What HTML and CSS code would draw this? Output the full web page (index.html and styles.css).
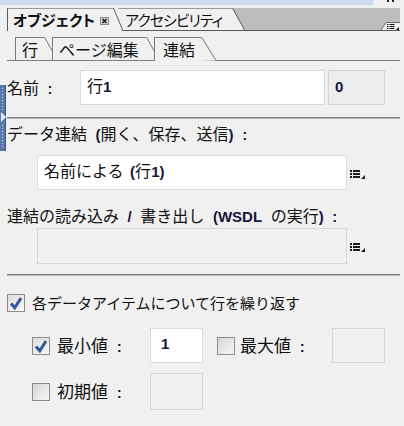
FILE: index.html
```html
<!DOCTYPE html>
<html lang="ja">
<head>
<meta charset="utf-8">
<link rel="stylesheet" href="styles.css">
</head>
<body>
<div class="topbar">
  <div class="titlefill"></div>
  <div class="grip"><svg width="8" height="2" viewBox="0 0 8 2"><rect x="0" y="0" width="2" height="2" fill="#222"/><rect x="5" y="0" width="2" height="2" fill="#222"/></svg></div>
</div>

<div class="tabs">
  <div class="tab tab-active">
    <span class="tab-label">オブジェクト<span class="close"><svg width="9" height="8" viewBox="0 0 9 8"><rect x="0.5" y="0.5" width="8" height="7" fill="#d4d4d4" stroke="#8a8a8a"/><path d="M2.5 2 L6.5 6 M6.5 2 L2.5 6" stroke="#111" stroke-width="1.4"/></svg></span></span>
    <svg class="slant" width="10" height="23" viewBox="0 0 10 23"><polygon points="0,0 0.5,0 10,23 0,23" fill="#f0f0f0"/><line x1="0.5" y1="0" x2="10" y2="23" stroke="#5a5a5a"/></svg>
  </div>
  <div class="tab tab-inactive">
    <span class="tab-label">アクセシビリティ</span>
    <svg class="slant" width="13" height="23" viewBox="0 0 13 23"><rect x="0" y="0" width="13" height="23" fill="#bdbdbd"/><polygon points="0,0 0.5,0 12.5,22 0,22" fill="#f0f0f0"/><line x1="0.5" y1="0" x2="12.5" y2="22" stroke="#5a5a5a"/><line x1="0" y1="22.5" x2="13" y2="22.5" stroke="#5a5a5a"/></svg>
  </div>
  <div class="tabs-fill">
    <svg class="panel-menu" width="19" height="8" viewBox="0 0 19 8"><polygon points="0,8 5,0.5 19,0.5 19,8" fill="#f0f0f0"/><polyline points="0,8 5,0.5 19,0.5" fill="none" stroke="#6a6a6a"/><g fill="#111"><rect x="6" y="2" width="1.5" height="1"/><rect x="8.5" y="2" width="5" height="1"/><rect x="6" y="4" width="1.5" height="1"/><rect x="8.5" y="4" width="5" height="1"/><rect x="6" y="6" width="1.5" height="1"/><rect x="8.5" y="6" width="5" height="1"/><polygon points="18,5 18,8 15,8"/></g></svg>
  </div>
</div>

<div class="panel">
  <div class="subtabs">
    <div class="subtab">
      <span class="sub-label">行</span>
      <svg class="slant" width="13" height="23" viewBox="0 0 13 23"><polygon points="0,0 0.5,0 13,23 0,23" fill="#f0f0f0"/><line x1="0.5" y1="0" x2="13" y2="23" stroke="#7a7a7a"/></svg>
    </div>
    <div class="subtab overlap">
      <span class="sub-label">ページ編集</span>
      <svg class="slant" width="13" height="23" viewBox="0 0 13 23"><polygon points="0,0 0.5,0 13,23 0,23" fill="#f0f0f0"/><line x1="0.5" y1="0" x2="13" y2="23" stroke="#7a7a7a"/></svg>
    </div>
    <div class="subtab overlap subtab-active">
      <span class="sub-label">連結</span>
      <svg class="slant" width="15" height="24" viewBox="0 0 15 24"><polygon points="0,0 0.5,0 15,23.5 0,24" fill="#f0f0f0"/><line x1="0.5" y1="0" x2="15" y2="23.5" stroke="#7a7a7a"/></svg>
    </div>
  </div>

  <div class="name-row">
    <span class="label name-label">名前 <span class="lat">:</span></span>
    <div class="field name-field"><span class="field-text">行<span class="lat">1</span></span></div>
    <div class="field field-gray count-field"><span class="field-text"><span class="lat">0</span></span></div>
  </div>

  <div class="sep sep-first"></div>

  <div class="label section-label">データ連結 <span class="lat">(</span>開く、保存、送信<span class="lat">)</span> <span class="lat">:</span></div>
  <div class="field-line first-line">
    <div class="field wide-field"><span class="field-text">名前による <span class="lat">(</span>行<span class="lat">1)</span></span></div>
    <svg class="list-icon" width="15" height="9" viewBox="0 0 15 9"><g fill="#1a1a1a"><rect x="0" y="0" width="2" height="2"/><rect x="3" y="0" width="7" height="2"/><rect x="0" y="3" width="2" height="2"/><rect x="3" y="3" width="7" height="2"/><rect x="0" y="6" width="2" height="2"/><rect x="3" y="6" width="7" height="2"/><polygon points="15,5 15,9 11,9"/></g></svg>
  </div>

  <div class="label section-label second-label">連結の読み込み <span class="lat">/</span> 書き出し <span class="lat">(WSDL</span> の実行<span class="lat">)</span> <span class="lat">:</span></div>
  <div class="field-line second-line">
    <div class="field wide-field field-disabled"></div>
    <svg class="list-icon" width="15" height="9" viewBox="0 0 15 9"><g fill="#1a1a1a"><rect x="0" y="0" width="2" height="2"/><rect x="3" y="0" width="7" height="2"/><rect x="0" y="3" width="2" height="2"/><rect x="3" y="3" width="7" height="2"/><rect x="0" y="6" width="2" height="2"/><rect x="3" y="6" width="7" height="2"/><polygon points="15,5 15,9 11,9"/></g></svg>
  </div>

  <div class="sep sep-second"></div>

  <div class="check-row repeat-row">
    <span class="checkbox checked"><svg width="16" height="16" viewBox="0 0 16 16"><path d="M3 8.5 L6.8 12.8 L13 3" fill="none" stroke="#35569a" stroke-width="3"/></svg></span>
    <span class="label repeat-label">各データアイテムについて行を繰り返す</span>
  </div>

  <div class="value-row min-row">
    <span class="checkbox checked"><svg width="16" height="16" viewBox="0 0 16 16"><path d="M3 8.5 L6.8 12.8 L13 3" fill="none" stroke="#35569a" stroke-width="3"/></svg></span>
    <span class="label value-label">最小値 <span class="lat">:</span></span>
    <div class="field value-field"><span class="field-text"><span class="lat">1</span></span></div>
    <span class="checkbox second-check"></span>
    <span class="label value-label">最大値 <span class="lat">:</span></span>
    <div class="field value-field field-disabled"></div>
  </div>

  <div class="value-row init-row">
    <span class="checkbox"></span>
    <span class="label value-label">初期値 <span class="lat">:</span></span>
    <div class="field value-field field-disabled tall"></div>
  </div>
</div>

<div class="edge-handle">
  <svg width="6" height="66" viewBox="0 0 6 66">
    <rect x="0" y="0" width="6" height="66" fill="#5a79a8"/>
    <rect x="5" y="0" width="1" height="66" fill="#3e5a86"/>
    <g fill="#c9d6ea">
      <rect x="2" y="3" width="1" height="1"/><rect x="2" y="6" width="1" height="1"/><rect x="2" y="9" width="1" height="1"/><rect x="2" y="12" width="1" height="1"/><rect x="2" y="15" width="1" height="1"/><rect x="2" y="18" width="1" height="1"/><rect x="2" y="21" width="1" height="1"/><rect x="2" y="24" width="1" height="1"/>
      <rect x="2" y="40" width="1" height="1"/><rect x="2" y="43" width="1" height="1"/><rect x="2" y="46" width="1" height="1"/><rect x="2" y="49" width="1" height="1"/><rect x="2" y="52" width="1" height="1"/><rect x="2" y="55" width="1" height="1"/><rect x="2" y="58" width="1" height="1"/><rect x="2" y="61" width="1" height="1"/>
    </g>
    <polygon points="1,27 6,32 1,37" fill="#e8eef8"/>
  </svg>
</div>
</body>
</html>
```

FILE: styles.css
```css
* { box-sizing: border-box; }

html, body {
  margin: 0;
  padding: 0;
}

body {
  position: relative;
  width: 404px;
  height: 426px;
  overflow: hidden;
  background: #f0f0f0;
  color: #111;
  font-family: "Noto Sans CJK JP", "Noto Sans", sans-serif;
  font-size: 16px;
  line-height: 20px;
}

.label {
  word-spacing: 5px;
}

.lat {
  font-family: "Liberation Sans", Arial, sans-serif;
  font-weight: bold;
  font-size: 15px;
  color: #16163a;
  word-spacing: 0;
}

/* top title bar */
.topbar {
  display: flex;
  height: 5px;
}
.titlefill {
  flex: 1;
  background: #cddcec;
}
.grip {
  width: 31px;
  display: flex;
  justify-content: flex-end;
  align-items: flex-start;
  padding-right: 9px;
}
.grip svg { display: block; }

/* main tabs */
.tabs {
  display: flex;
  height: 23px;
  margin-top: 3px;
  padding-left: 7px;
  padding-right: 4px;
}
.tab {
  display: flex;
  height: 23px;
}
.tab .slant { display: block; flex: none; }
.tab-label {
  display: flex;
  align-items: center;
  height: 23px;
  background: #f0f0f0;
  border-top: 1px solid #9a9a9a;
  white-space: nowrap;
  font-size: 15px;
  font-feature-settings: "palt" 1;
}
.tab-active {
  z-index: 2;
}
.tab-active .tab-label {
  border-left: 1px solid #5a5a5a;
  padding: 0 4px 0 5px;
  font-weight: bold;
}
.close {
  display: flex;
  margin-left: 5px;
  margin-top: 2px;
}
.close svg { display: block; }
.tab-inactive {
  margin-left: -5px;
  z-index: 1;
}
.tab-inactive .tab-label {
  border-bottom: 1px solid #5a5a5a;
  padding: 0 10px 0 7px;
  letter-spacing: -1px;
}
.tabs-fill {
  flex: 1;
  background: #bdbdbd;
  border-bottom: 1px solid #5a5a5a;
  display: flex;
  justify-content: flex-end;
  align-items: flex-end;
}
.panel-menu { display: block; }

/* panel */
.panel {
  padding: 0 4px 0 7px;
}

.subtabs {
  display: flex;
  height: 24px;
  margin-top: 6px;
  padding-left: 8px;
  border-bottom: 1px solid #808080;
}
.subtab {
  display: flex;
  height: 23px;
}
.subtab .slant { display: block; flex: none; }
.sub-label {
  display: flex;
  align-items: center;
  height: 23px;
  background: #f0f0f0;
  border-left: 1px solid #7a7a7a;
  border-top: 1px solid #7a7a7a;
  white-space: nowrap;
  padding: 0 4px 0 6px;
}
.subtab:first-child .sub-label { width: 29px; }
.overlap { margin-left: -5px; }
.subtab:nth-child(2) .sub-label { width: 94px; }
.subtab-active {
  height: 24px;
  margin-left: -5px;
}
.subtab-active .sub-label {
  height: 24px;
  width: 47px;
  padding-left: 8px;
  padding-bottom: 1px;
}

/* name row */
.name-row {
  display: flex;
  align-items: center;
  margin-top: 9px;
  height: 35px;
}
.name-label {
  width: 73px;
  flex: none;
}
.field {
  display: flex;
  align-items: center;
  height: 35px;
  background: #fff;
  border: 1px solid #d6dce4;
  padding: 0 6px 3px 6px;
  white-space: nowrap;
}
.field-text {
  white-space: pre;
}
.name-field {
  width: 245px;
}
.count-field {
  width: 57px;
  margin-left: 3px;
}
.field-gray {
  background: #ececec;
  border-color: #d3d3d3;
}
.field-disabled {
  background: #f0f0f0;
  border-color: #d6d6d6;
}

.sep {
  height: 2px;
  border-top: 1px solid #7c7c7c;
  border-bottom: 1px solid #b8b8b8;
}
.sep-first { margin-top: 12px; }

.section-label {
  margin-top: 4px;
  height: 20px;
  white-space: nowrap;
}
.second-label { margin-top: 15px; }

.field-line {
  display: flex;
  align-items: center;
  padding-left: 30px;
}
.first-line { margin-top: 12px; }
.second-line { margin-top: 3px; }
.wide-field {
  width: 310px;
  word-spacing: 3px;
}
.second-line .wide-field { height: 36px; }
.list-icon {
  display: block;
  margin-left: 3px;
  margin-top: 3px;
}

.sep-second { margin-top: 10px; }

/* checkboxes */
.checkbox {
  display: flex;
  align-items: center;
  justify-content: center;
  width: 18px;
  height: 18px;
  flex: none;
  border: 1px solid #8c8c8c;
  background: linear-gradient(135deg, #d6d6d6, #f6f6f6);
}
.checkbox.checked {
  background: linear-gradient(135deg, #dcdcdc, #f8f8f8);
}
.checkbox svg { display: block; }

.check-row {
  display: flex;
  align-items: center;
  gap: 7px;
  margin-top: 17px;
  height: 20px;
}
.repeat-label {
  font-size: 15px;
}

.value-row {
  display: flex;
  align-items: center;
  padding-left: 25px;
}
.min-row { margin-top: 15px; }
.init-row { margin-top: 10px; }
.value-label {
  margin-left: 7px;
  width: 93px;
  white-space: nowrap;
  font-size: 17px;
}
.value-field {
  width: 53px;
  padding-left: 10px;
  padding-bottom: 6px;
}
.value-field.tall { height: 37px; }
.second-check {
  margin-left: 14px;
}
.second-check + .value-label {
  margin-left: 5px;
  width: 92px;
}

/* left docking handle (overlay) */
.edge-handle {
  position: absolute;
  left: 0;
  top: 85px;
  width: 6px;
  height: 66px;
}
.edge-handle svg { display: block; }
```
